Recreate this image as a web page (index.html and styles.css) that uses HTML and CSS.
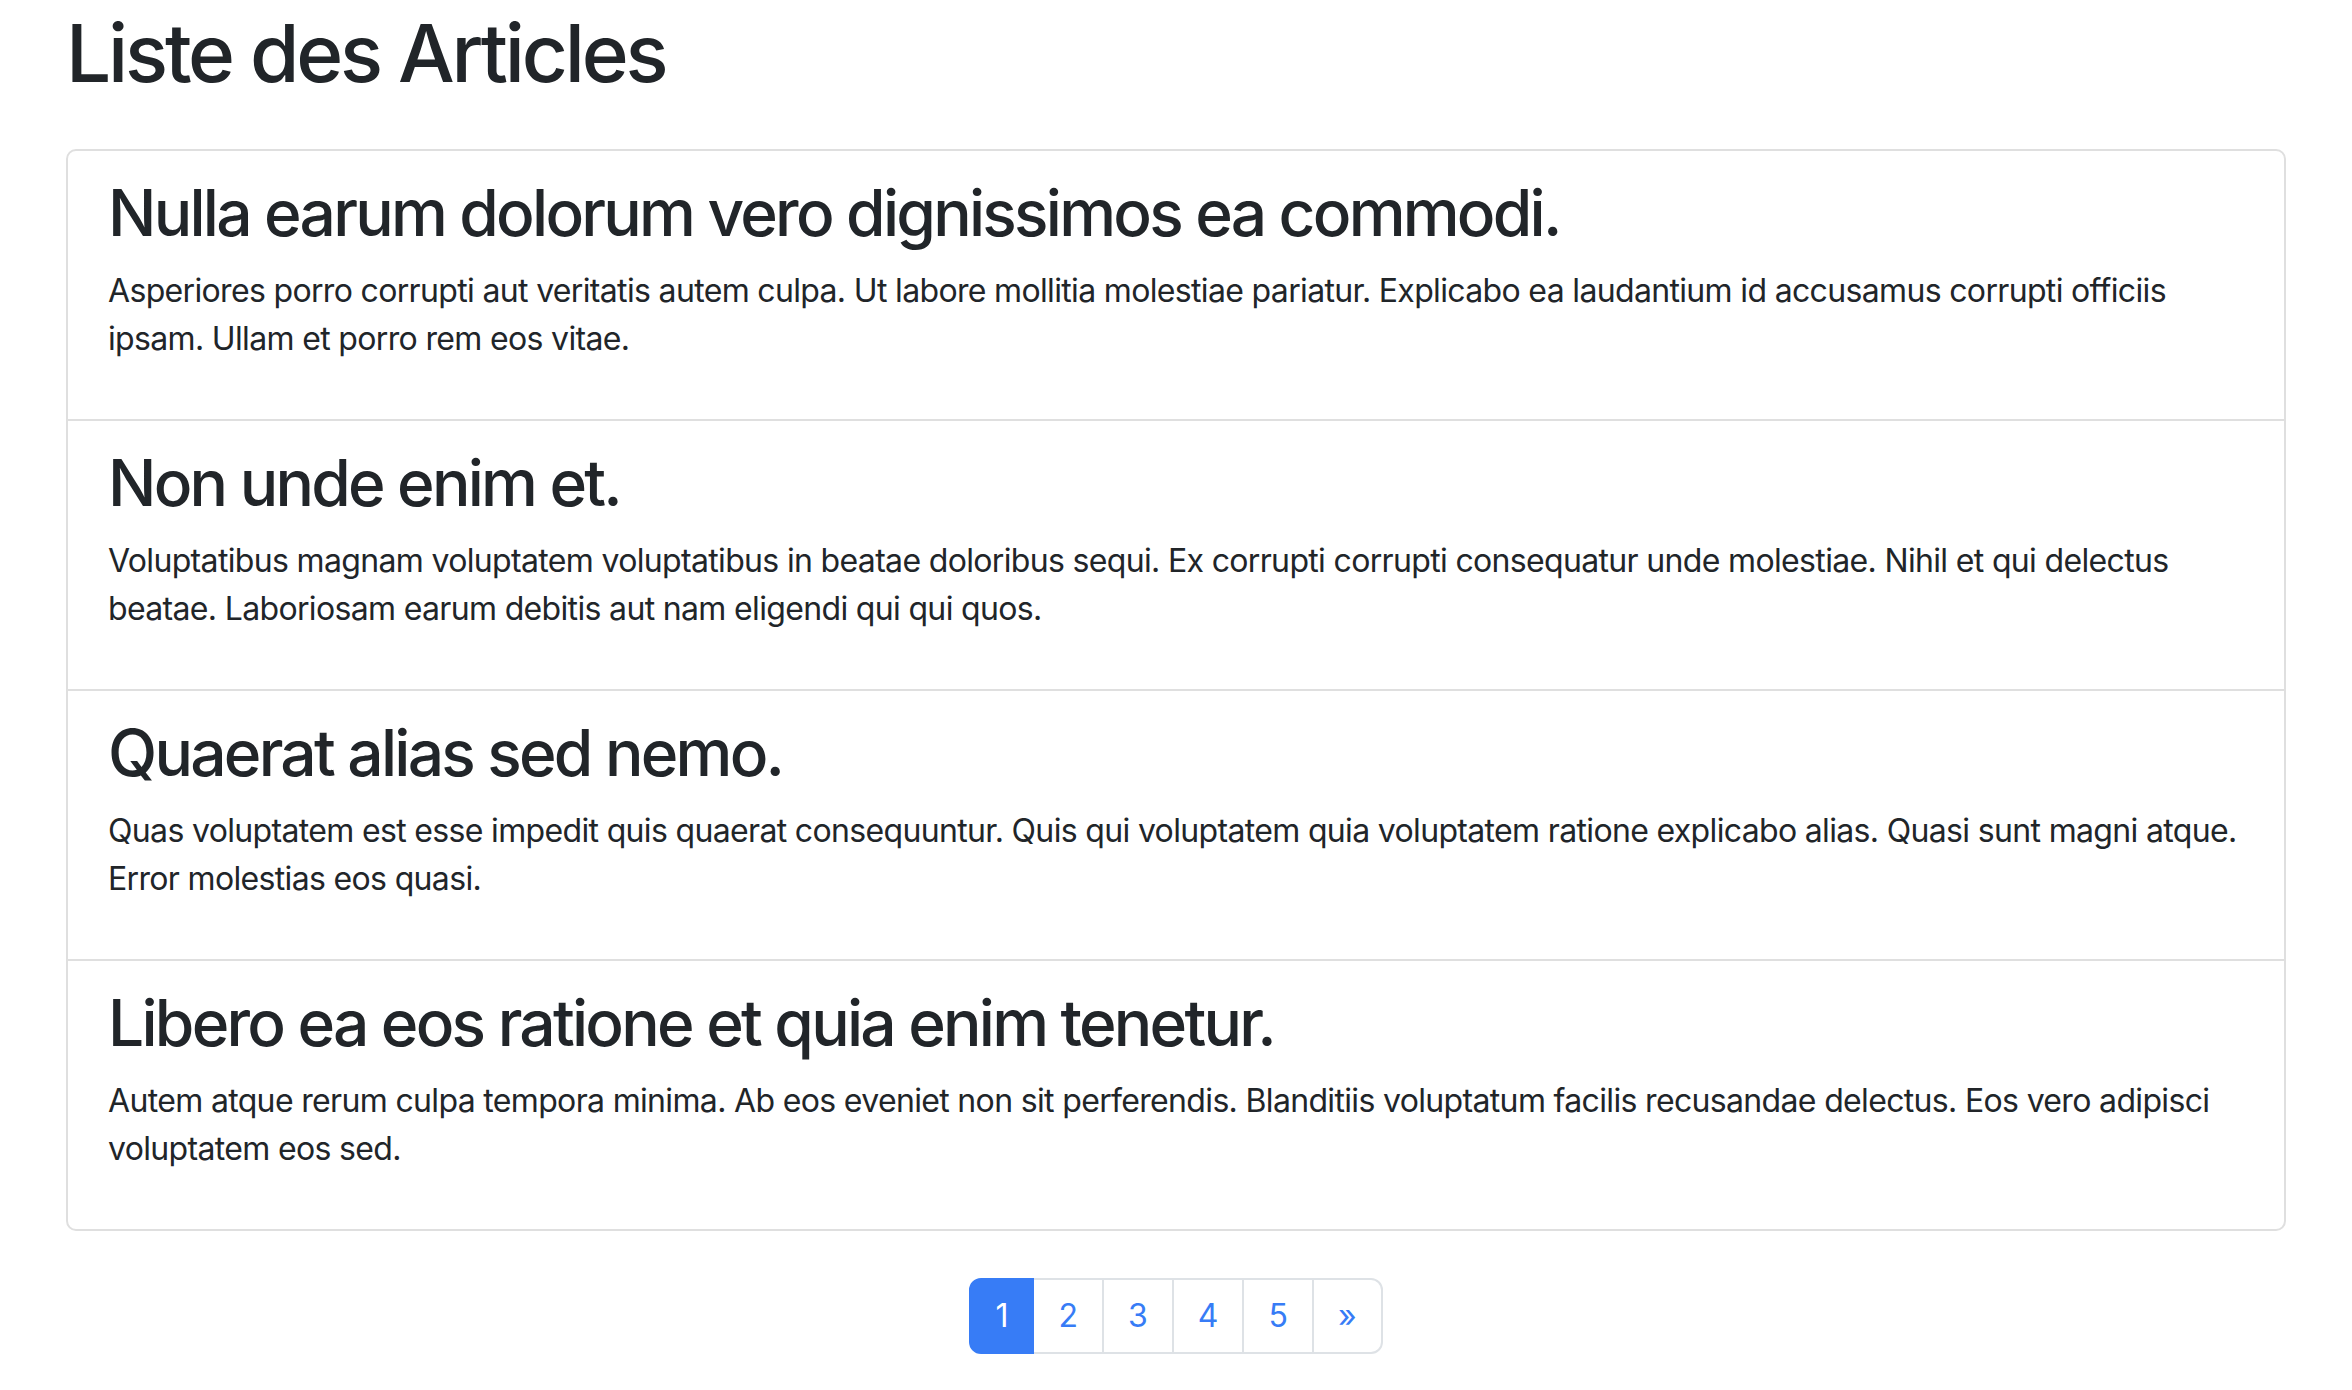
FILE: index.html
```html
<!DOCTYPE html>
<html lang="fr">
<head>
<meta charset="utf-8">
<title>Liste des Articles</title>
<link rel="stylesheet" href="styles.css">
</head>
<body>
<main class="page">
  <h1 class="page-title">Liste des Articles</h1>
  <ul class="articles">
    <li class="article">
      <h2 class="article-title">Nulla earum dolorum vero dignissimos ea commodi.</h2>
      <p class="article-text">Asperiores porro corrupti aut veritatis autem culpa. Ut labore mollitia molestiae pariatur. Explicabo ea laudantium id accusamus corrupti officiis ipsam. Ullam et porro rem eos vitae.</p>
    </li>
    <li class="article">
      <h2 class="article-title">Non unde enim et.</h2>
      <p class="article-text">Voluptatibus magnam voluptatem voluptatibus in beatae doloribus sequi. Ex corrupti corrupti consequatur unde molestiae. Nihil et qui delectus beatae. Laboriosam earum debitis aut nam eligendi qui qui quos.</p>
    </li>
    <li class="article">
      <h2 class="article-title">Quaerat alias sed nemo.</h2>
      <p class="article-text">Quas voluptatem est esse impedit quis quaerat consequuntur. Quis qui voluptatem quia voluptatem ratione explicabo alias. Quasi sunt magni atque. Error molestias eos quasi.</p>
    </li>
    <li class="article">
      <h2 class="article-title">Libero ea eos ratione et quia enim tenetur.</h2>
      <p class="article-text">Autem atque rerum culpa tempora minima. Ab eos eveniet non sit perferendis. Blanditiis voluptatum facilis recusandae delectus. Eos vero adipisci voluptatem eos sed.</p>
    </li>
  </ul>
  <nav class="pager">
    <ul class="pagination">
      <li class="page-item active"><span class="page-link">1</span></li>
      <li class="page-item"><a class="page-link" href="#">2</a></li>
      <li class="page-item"><a class="page-link" href="#">3</a></li>
      <li class="page-item"><a class="page-link" href="#">4</a></li>
      <li class="page-item"><a class="page-link" href="#">5</a></li>
      <li class="page-item"><a class="page-link" href="#">&raquo;</a></li>
    </ul>
  </nav>
</main>
</body>
</html>
```

FILE: styles.css
```css
* { box-sizing: border-box; }
html, body { margin: 0; padding: 0; background: #fff; }
body {
  font-family: Inter, "Noto Sans", "Liberation Sans", sans-serif;
  color: #212529;
  font-size: 32px;
  line-height: 48px;
}
.page {
  padding: 5px 66px 40px;
}
.page-title {
  margin: 0 0 48px;
  font-size: 80px;
  line-height: 96px;
  font-weight: 500;
  letter-spacing: -3.2px;
}
.articles {
  list-style: none;
  margin: 0;
  padding: 0;
  border: 2px solid #dfdfdf;
  border-radius: 10px;
}
.article {
  padding: 24px 30px 24px 40px;
  border-top: 2px solid #dfdfdf;
}
.article:first-child { border-top: 0; }
.article-title {
  margin: 0 0 16px;
  font-size: 64px;
  line-height: 76px;
  font-weight: 500;
  letter-spacing: -2.75px;
}
.article-text {
  margin: 0 0 32px;
  font-size: 32px;
  line-height: 48px;
  letter-spacing: -0.66px;
}
.pager {
  display: flex;
  justify-content: center;
  margin-top: 47px;
}
.pagination {
  display: flex;
  list-style: none;
  margin: 0;
  padding: 0;
}
.page-link {
  display: block;
  padding: 12px 24px;
  font-size: 32px;
  line-height: 48px;
  color: #377cf6;
  text-decoration: none;
  background: #fff;
  border: 2px solid #dee2e6;
  margin-left: -2px;
}
.page-item:first-child .page-link {
  margin-left: 0;
  border-radius: 12px 0 0 12px;
}
.page-item:last-child .page-link {
  border-radius: 0 12px 12px 0;
}
.page-item.active .page-link {
  background: #377cf6;
  border-color: #377cf6;
  color: #fff;
  position: relative;
  z-index: 1;
}
```
